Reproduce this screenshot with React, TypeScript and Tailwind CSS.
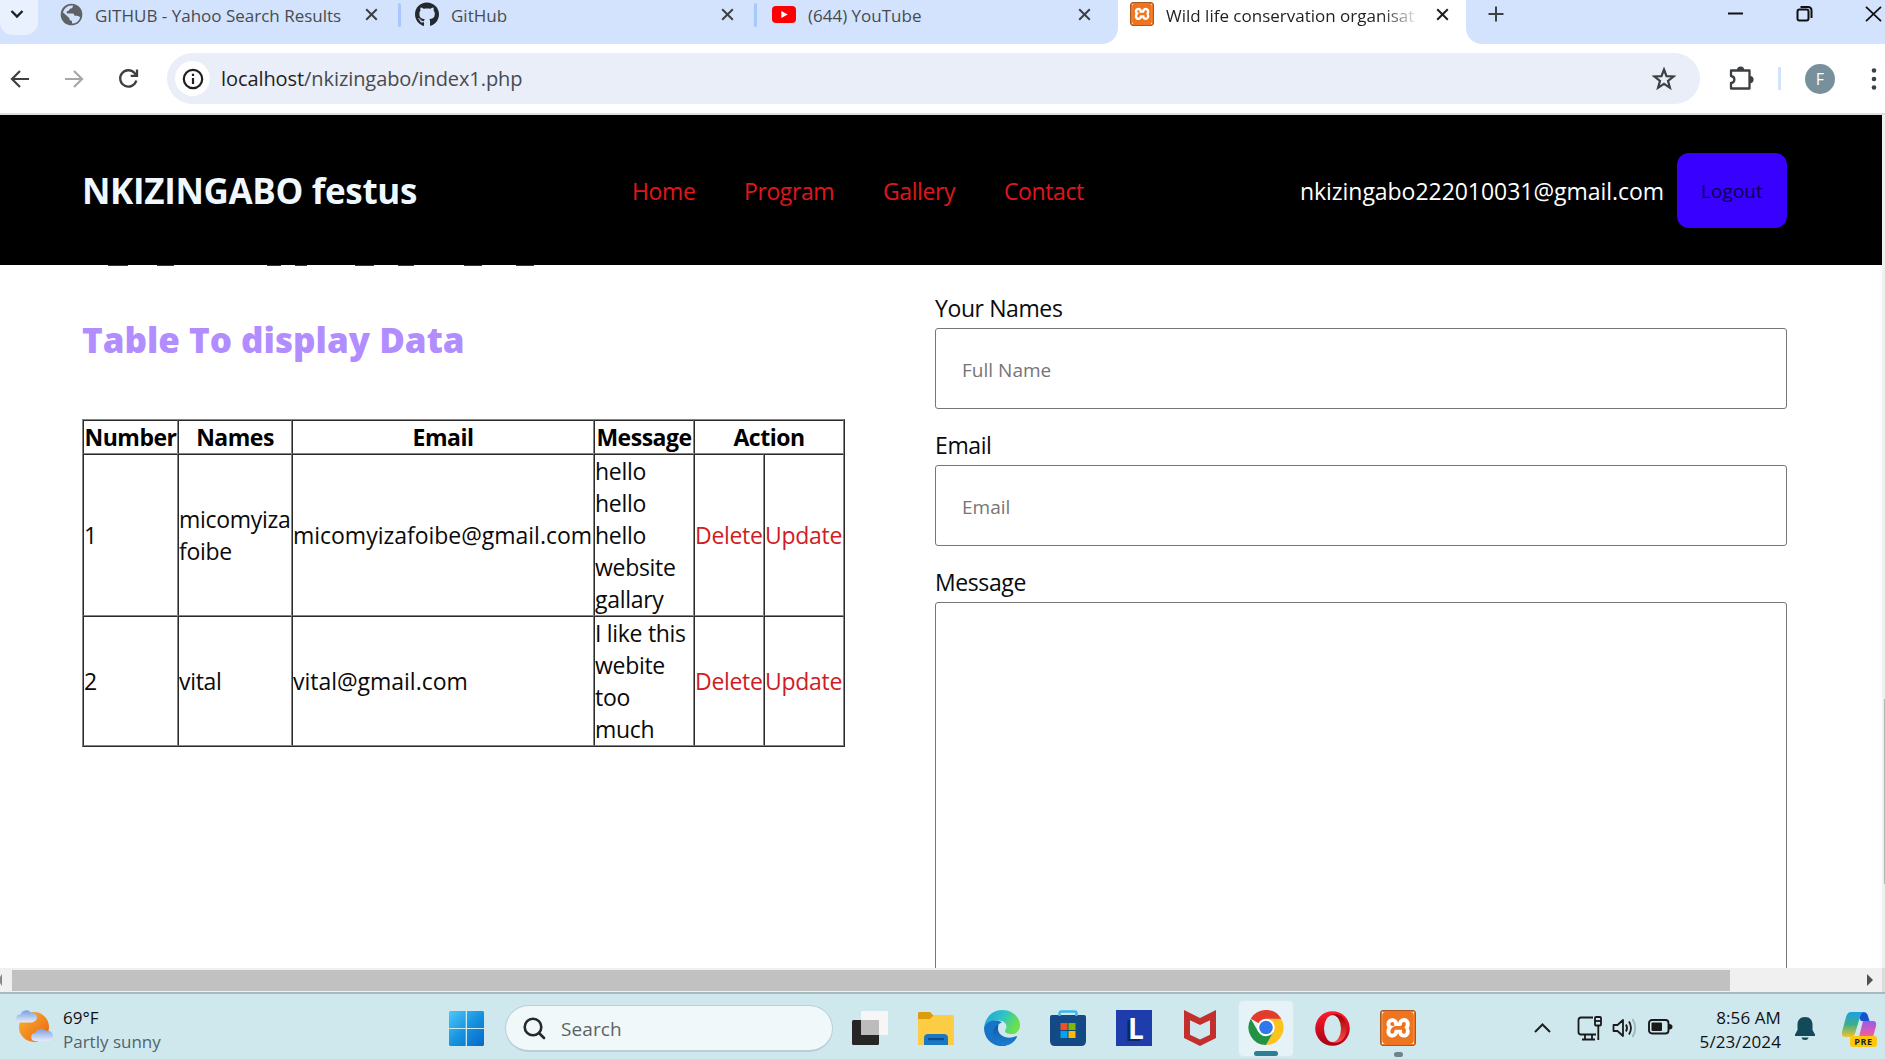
import type { ReactNode } from "react";
import { FaGithub } from "react-icons/fa";
import { SiXampp } from "react-icons/si";

const FONT = "font-['Open_Sans','Noto_Sans',sans-serif]";

function Cross({ className = "", w = 2 }: { className?: string; w?: number }) {
  return (
    <svg className={className} width="13" height="13" viewBox="0 0 13 13" fill="none" stroke="currentColor" strokeWidth={w}>
      <path d="M1.2 1.2l10.6 10.6M11.8 1.2L1.2 11.8" />
    </svg>
  );
}

function GlobeIcon() {
  return (
    <svg width="23" height="23" viewBox="0 0 23 23">
      <circle cx="11.5" cy="11.5" r="10.8" fill="#5f6368" />
      <path d="M13 2.6c-.2 2.4-1.2 3-3.2 3.2-.6 1.6-1 2.4-3 2.3v2.5h5.6c1.4 0 2 .9 2 2.2h2.4c1.7 0 2.4 1 3.4 1.6A9 9 0 0 1 12 20.500v-2.700c-1.700-.2-2.700-1-2.700-2.900L2.900 9.200A9 9 0 0 1 13 2.600z" fill="#d3e3fd" />
      <path d="M14.500 4.200l-1.500 3.600 2.400 2.200 1.800 1.800 3 .4A9 9 0 0 0 14.500 4.200z" fill="#5f6368" />
    </svg>
  );
}

function YouTubeIcon() {
  return (
    <svg width="24" height="17" viewBox="0 0 24 17">
      <rect width="24" height="17" rx="4" fill="#f00" />
      <path d="M9.300 5v7l6.400-3.500z" fill="#fff" />
    </svg>
  );
}

function XamppTile({ size }: { size: number }) {
  return (
    <span className="flex items-center justify-center rounded-[3px] border border-[#a9591e] bg-[#ee7420] p-px text-white">
      <span className="flex bg-white">
        <SiXampp size={size} color="#ee7420" />
      </span>
    </span>
  );
}

function Tab({ icon, title, className = "", closeClass = "", children }: { icon: ReactNode; title: string; className?: string; closeClass?: string; children?: ReactNode }) {
  return (
    <div className={`flex h-[28px] shrink-0 items-center ${className}`}>
      <span className="flex w-[24px] shrink-0 items-center justify-center">{icon}</span>
      <span className="ml-[12px] flex-1 overflow-hidden pt-[3px] text-[17px] leading-[25px] whitespace-nowrap text-[#474b50]">{title}</span>
      <Cross className={`shrink-0 text-[#3c4043] ${closeClass}`} />
      {children}
    </div>
  );
}

function TabStrip() {
  return (
    <div className="flex h-[44px] bg-white">
      <div className="flex w-[1118px] shrink-0 rounded-br-[16px] bg-[#d3e3fd]">
        <div className="flex h-[35px] w-[38px] shrink-0 items-start justify-center rounded-b-[13px] bg-[#e9f0fe] pt-[9px]">
          <svg width="14" height="10" viewBox="0 0 14 10" fill="none" stroke="#1f1f1f" strokeWidth="2.400" className="mr-[4px]">
            <path d="M1.500 2l5.500 5.500L12.500 2" />
          </svg>
        </div>
        <Tab className="ml-[21px] w-[319px]" icon={<GlobeIcon />} title="GITHUB - Yahoo Search Results" />
        <span className="mt-[3px] ml-[20px] h-[24px] w-[3px] rounded bg-[#a8c7fa]" />
        <Tab className="ml-[14px] w-[319px]" icon={<FaGithub size={25} color="#24292f" />} title="GitHub" />
        <span className="mt-[3px] ml-[20px] h-[24px] w-[3px] rounded bg-[#a8c7fa]" />
        <Tab className="ml-[15px] w-[319px]" icon={<YouTubeIcon />} title="(644) YouTube" />
      </div>
      <div className="flex w-[348px] shrink-0 pl-[12px]">
        <div className="flex h-[28px] items-center">
          <XamppTile size={20} />
          <span className="ml-[12px] w-[252px] overflow-hidden bg-linear-to-r from-[#1f1f1f] from-85% to-[#d8d8d8] to-98% bg-clip-text pt-[3px] text-[17px] leading-[25px] whitespace-nowrap text-transparent">
            Wild life conservation organisat
          </span>
          <Cross className="ml-[18px] text-[#1f1f1f]" />
        </div>
      </div>
      <div className="flex h-[44px] flex-1 rounded-bl-[16px] bg-[#d3e3fd] pl-[22px]">
        <svg className="mt-[6px]" width="16" height="16" viewBox="0 0 16 16" stroke="#3c4043" strokeWidth="2">
          <path d="M8 .5v15M.5 8h15" />
        </svg>
        <svg className="mt-[6px] ml-[223px]" width="17" height="16" viewBox="0 0 17 16" stroke="#111" strokeWidth="2">
          <path d="M1 7.500h15" />
        </svg>
        <svg className="mt-[6px] ml-[52px]" width="17" height="16" viewBox="0 0 17 16" fill="none" stroke="#111" strokeWidth="2">
          <rect x="1.500" y="3.500" width="11" height="11" rx="2" />
          <path d="M4.500 1h7.500q3.500 0 3.500 3.500V12" />
        </svg>
        <svg className="mt-[6px] ml-[52px]" width="17" height="16" viewBox="0 0 17 16" fill="none" stroke="#111" strokeWidth="1.800">
          <path d="M1 .8L16 15.200M16 .8L1 15.200" />
        </svg>
      </div>
    </div>
  );
}

function AddressBar() {
  return (
    <div className="flex h-[71px] items-center border-b-2 border-[#dfdfdf] bg-white">
      <svg className="ml-[10px]" width="20" height="20" viewBox="0 0 20 20" fill="none" stroke="#3c4043" strokeWidth="2.200">
        <path d="M10 2L2 10l8 8M2 10h17" />
      </svg>
      <svg className="ml-[34px]" width="20" height="20" viewBox="0 0 20 20" fill="none" stroke="#a5a7a9" strokeWidth="2.200">
        <path d="M10 2l8 8-8 8M18 10H1" />
      </svg>
      <svg className="ml-[34px]" width="21" height="21" viewBox="0 0 21 21" fill="none" stroke="#3c4043" strokeWidth="2.300">
        <path d="M18.300 12.500A8.200 8.200 0 1 1 16.500 5L18.500 7.500M19 1.500v6.300h-6.300" />
      </svg>
      <div className="ml-[28px] flex h-[51px] w-[1533px] items-center rounded-full bg-[#eaeef8]">
        <span className="ml-[8px] flex size-[35px] items-center justify-center rounded-full bg-white">
          <svg width="22" height="22" viewBox="0 0 22 22" fill="none" stroke="#1f1f1f" strokeWidth="2.200">
            <circle cx="11" cy="11" r="9.200" />
            <path d="M11 10v6M11 5.800v2.300" />
          </svg>
        </span>
        <span className="ml-[11px] text-[20px] leading-[30px] tracking-[-0.08px] text-[#474b50]">
          <span className="text-[#1f1f1f]">localhost</span>/nkizingabo/index1.php
        </span>
        <svg className="mr-[24px] ml-auto" width="24" height="24" viewBox="0 0 24 24" fill="none" stroke="#3c4043" strokeWidth="2.200">
          <path d="M12 2.500l2.500 6.600 7 .4-5.500 4.400 1.900 6.900L12 16.900l-5.900 3.900L8 13.900 2.500 9.500l7-.4z" />
        </svg>
      </div>
      <svg className="ml-[28px]" width="26" height="26" viewBox="0 0 26 26">
        <path d="M3 4.500h5.500h13v18H3v-5.500c4.500-.5 4.500-6.500 0-7z" fill="none" stroke="#3c4043" strokeWidth="2.300" strokeLinejoin="round" />
        <path d="M9 4a3.600 3.600 0 0 1 7.200 0zM22 10a3.600 3.600 0 0 1 0 7.200z" fill="#3c4043" />
      </svg>
      <span className="ml-[24px] h-[23px] w-[3px] bg-[#d3e3fd]" />
      <span className="ml-[24px] flex size-[30px] items-center justify-center rounded-full bg-[#78909c] text-[16px] text-white">F</span>
      <svg className="ml-[36px]" width="6" height="22" viewBox="0 0 6 22" fill="#3c4043">
        <circle cx="3" cy="2.500" r="2.300" />
        <circle cx="3" cy="11" r="2.300" />
        <circle cx="3" cy="19.500" r="2.300" />
      </svg>
    </div>
  );
}

function SiteHeader() {
  return (
    <header className="flex h-[150px] items-center bg-black pr-[95px] pl-[82px] whitespace-nowrap">
      <h1 className="w-[550px] pt-[2px] text-[35px] leading-[48px] font-bold tracking-[-0.34px] text-[#f0f8ff]">NKIZINGABO festus</h1>
      <nav className="flex pt-[2px] text-[23px] leading-[32px] tracking-[-0.4px] text-[#e0161a]">
        <a className="w-[112px]">Home</a>
        <a className="w-[139px]">Program</a>
        <a className="w-[121px]">Gallery</a>
        <a>Contact</a>
      </nav>
      <span className="ml-auto pt-[2px] text-[23px] leading-[32px] tracking-[-0.04px] text-white">nkizingabo222010031@gmail.com</span>
      <button className="ml-[13px] h-[75px] w-[110px] rounded-[12px] bg-[#3700ff] pt-[2px] text-[19px] tracking-[0.05px] text-[#0c004a]">Logout</button>
    </header>
  );
}

const cell = "border-t border-l border-r border-b border-t-[#2b2b2b] border-l-[#2b2b2b] border-r-[#858585] border-b-[#858585] p-0";

const rows = [
  { n: "1", names: ["micomyiza", "foibe"], email: "micomyizafoibe@gmail.com", message: ["hello", "hello", "hello", "website", "gallary"], h: "h-[162px]" },
  { n: "2", names: ["vital"], email: "vital@gmail.com", message: ["I like this", "webite", "too", "much"], h: "h-[130px]" },
];

function Lines({ items }: { items: string[] }) {
  return (
    <>
      {items.map((t, i) => (
        <div key={i}>{t}</div>
      ))}
    </>
  );
}

function DataTable() {
  return (
    <table className="w-[763px] table-fixed border-separate border-spacing-0 border border-t-[#858585] border-r-[#2b2b2b] border-b-[#2b2b2b] border-l-[#858585] text-[23px] leading-[32px] tracking-[-0.3px] whitespace-nowrap text-[#0a0a0a]">
      <colgroup>
        <col className="w-[95px]" />
        <col className="w-[114px]" />
        <col className="w-[302px]" />
        <col className="w-[100px]" />
        <col className="w-[70px]" />
        <col className="w-[80px]" />
      </colgroup>
      <thead>
        <tr className="h-[34px] tracking-[-0.5px] text-black">
          <th className={cell}>Number</th>
          <th className={cell}>Names</th>
          <th className={cell}>Email</th>
          <th className={cell}>Message</th>
          <th className={cell} colSpan={2}>Action</th>
        </tr>
      </thead>
      <tbody>
        {rows.map((r) => (
          <tr key={r.n} className={r.h}>
            <td className={cell}>{r.n}</td>
            <td className={cell}><Lines items={r.names} /></td>
            <td className={`${cell} tracking-[-0.02px]`}>{r.email}</td>
            <td className={cell}><Lines items={r.message} /></td>
            <td className={`${cell} text-[#d01c24]`}>Delete</td>
            <td className={`${cell} text-[#d01c24]`}>Update</td>
          </tr>
        ))}
      </tbody>
    </table>
  );
}

function Field({ label, placeholder, boxClass }: { label: string; placeholder?: string; boxClass: string }) {
  return (
    <div>
      <div className="h-[56px] pt-[20px] text-[23px] leading-[32px] tracking-[-0.4px] text-[#0a0a0a]">{label}</div>
      <div className={`flex w-[852px] items-center rounded-[3px] border border-[#767676] pt-[4px] pl-[26px] text-[19px] tracking-[0.02px] text-[#757575] ${boxClass}`}>{placeholder}</div>
    </div>
  );
}

function PageBody() {
  return (
    <main className="flex h-[703px] overflow-hidden bg-white">
      <section className="w-[935px] shrink-0 pl-[82px]">
        <div className="flex h-[1px] text-[#3c1fa8]">
          <span className="ml-[26px] w-[20px] bg-current" />
          <span className="ml-[29px] w-[17px] bg-current" />
          <span className="ml-[93px] w-[14px] bg-current" />
          <span className="ml-[14px] w-[12px] bg-current" />
          <span className="ml-[48px] w-[19px] bg-current" />
          <span className="ml-[24px] w-[16px] bg-current" />
          <span className="ml-[50px] w-[18px] bg-current" />
          <span className="ml-[34px] w-[18px] bg-current" />
        </div>
        <h2 className="mt-[50px] mb-[55px] text-[35px] leading-[48px] font-extrabold text-[#b28dff]">Table To display Data</h2>
        <DataTable />
      </section>
      <section className="pt-[7px]">
        <Field label="Your Names" placeholder="Full Name" boxClass="h-[81px]" />
        <Field label="Email" placeholder="Email" boxClass="h-[81px]" />
        <Field label="Message" boxClass="h-[440px]" />
      </section>
    </main>
  );
}

function HorizontalScrollbar() {
  return (
    <div className="flex h-[24px] items-center bg-[#f0f0f0] pb-px">
      <svg width="3" height="12" viewBox="0 0 3 12"><path d="M2 0v12L0 9V3z" fill="#888" /></svg>
      <span className="mt-px ml-[9px] h-[21px] w-[1718px] bg-[#c1c1c1]" />
      <svg className="ml-[137px]" width="6" height="12" viewBox="0 0 6 12"><path d="M0 0l6 6-6 6z" fill="#505050" /></svg>
    </div>
  );
}

function WeatherIcon() {
  return (
    <svg width="37" height="34" viewBox="0 0 37 34">
      <defs>
        <linearGradient id="sun" x1="0" y1="0" x2="1" y2="1"><stop stopColor="#f7b731" /><stop offset="1" stopColor="#ee5d10" /></linearGradient>
        <linearGradient id="cloud" x1="0" y1="0" x2="0" y2="1"><stop stopColor="#7b9fe0" /><stop offset="1" stopColor="#e4ecfc" /></linearGradient>
      </defs>
      <circle cx="18" cy="18" r="15" fill="url(#sun)" />
      <path d="M4 13.500a4 4 0 0 1 .5-8A6 6 0 0 1 15 3.800a4.500 4.500 0 0 1 3 8.700q-1 1-2.500 1z" fill="url(#cloud)" />
      <path d="M19 32a4 4 0 0 1 .5-8A6 6 0 0 1 30 22a5 5 0 0 1 3.500 10z" fill="url(#cloud)" />
    </svg>
  );
}

function StartIcon() {
  return (
    <svg width="35" height="35" viewBox="0 0 35 35">
      <defs>
        <linearGradient id="win" x1="0" y1="0" x2="1" y2="1" gradientUnits="objectBoundingBox"><stop stopColor="#4cc9fb" /><stop offset=".5" stopColor="#1793e0" /><stop offset="1" stopColor="#0468c8" /></linearGradient>
      </defs>
      <path d="M1 0h15.700v17H0V1zM18 0h16l1 1v16H18zM0 18h16.700v17H1l-1-1zM18 18h17v16l-1 1H18z" fill="url(#win)" />
    </svg>
  );
}

function TaskViewIcon() {
  return (
    <svg width="36" height="34" viewBox="0 0 36 34">
      <rect x="0" y="9" width="27" height="25" rx="1.500" fill="#262626" />
      <rect x="9" y="0" width="27" height="24" rx="1" fill="#f6f6f6" />
      <rect x="9" y="9" width="18" height="15" fill="#bcbcbc" />
    </svg>
  );
}

function ExplorerIcon() {
  return (
    <svg width="36" height="33" viewBox="0 0 36 33">
      <path d="M0 1.500Q0 0 1.500 0h10.500l3.500 3.500V10H0z" fill="#dc9c0b" />
      <path d="M0 7h12l4-4h18.500Q36 3 36 4.500V33H0z" fill="#fdcc45" />
      <path d="M6 33v-7q0-4 4-4h16q4 0 4 4v7z" fill="#1a78c2" />
      <rect x="10" y="26" width="16" height="2.200" rx="1" fill="#0c4a8b" />
    </svg>
  );
}

function EdgeIcon() {
  return (
    <svg width="36" height="36" viewBox="0 0 36 36">
      <defs>
        <linearGradient id="edgeTop" x1="0" y1="0" x2="1" y2=".4"><stop stopColor="#1f9fdc" /><stop offset=".55" stopColor="#2fc4c4" /><stop offset="1" stopColor="#6be04b" /></linearGradient>
        <linearGradient id="edgeLow" x1="0" y1="0" x2="0" y2="1"><stop stopColor="#0f58a6" /><stop offset="1" stopColor="#1b7fd0" /></linearGradient>
      </defs>
      <path d="M0 18C1 7 9 0 18 0c11 0 18 8 18 15 0 6-4 9-8.500 9-4 0-6.500-1.300-6.500-3 0-1.200 1.500-1.800 1.500-4.500 0-3-3-6-8-6C7 10.500 1 13 0 18z" fill="url(#edgeTop)" />
      <path d="M0 18c1-5 6-7.500 11-7.500 3 0 5 .5 7 2-3 .5-6 4-6 8.500 0 7 5 12 11 15C9 38 0 29 0 18z" fill="#1673c8" />
      <path d="M14.500 14.500c-4 2-6 6-5.500 10 .7 6 5.500 11 11.500 11 5 0 10-3.500 12.500-8.500.3-.8-.3-1-1-.7-8 3.500-18.500 0-18-8.300z" fill="url(#edgeLow)" />
    </svg>
  );
}

function StoreIcon() {
  return (
    <svg width="36" height="36" viewBox="0 0 36 36">
      <path d="M0 7q0-2 2-2h32q2 0 2 2v24q0 5-5 5H5q-5 0-5-5z" fill="#134a86" />
      <path d="M9.500 6V3.500q0-2 2-2h13q2 0 2 2V6" fill="none" stroke="#38b6ee" strokeWidth="2.400" />
      <path d="M10.500 13h7v7h-7z" fill="#f25022" />
      <path d="M18.500 13h7v7h-7z" fill="#7fba00" />
      <path d="M10.500 21h7v7h-7z" fill="#00a4ef" />
      <path d="M18.500 21h7v7h-7z" fill="#ffb900" />
    </svg>
  );
}

function McAfeeIcon() {
  return (
    <svg width="32" height="36" viewBox="0 0 32 36">
      <path fillRule="evenodd" fill="#c32f2c" d="M0 0l16 8 16-8v28l-16 8-16-8zM6 10.300v14.400l10 4.700 10-4.700V10.300L16 15z" />
    </svg>
  );
}

function ChromeIcon() {
  return (
    <svg width="36" height="36" viewBox="0 0 36 36">
      <path d="M18 18L2.400 9A18 18 0 0 1 33.600 9z" fill="#e33b2e" />
      <path d="M18 9h15.600A18 18 0 0 1 18 36l7.800-13.500z" fill="#fcc31e" />
      <path d="M10.200 22.500L2.400 9A18 18 0 0 0 18 36l7.800-13.500z" fill="#229342" />
      <circle cx="18" cy="18" r="9" fill="#fff" />
      <circle cx="18" cy="18" r="7" fill="#2f78ee" />
    </svg>
  );
}

function OperaIcon() {
  return (
    <svg width="35" height="35" viewBox="0 0 35 35">
      <defs>
        <linearGradient id="opera" x1="0" y1="0" x2="0" y2="1"><stop stopColor="#ff1b2d" /><stop offset="1" stopColor="#a70014" /></linearGradient>
        <linearGradient id="operaR" x1="0" y1="0" x2="0" y2="1"><stop stopColor="#9c0000" /><stop offset="1" stopColor="#ff4b4b" /></linearGradient>
      </defs>
      <circle cx="17.500" cy="17.500" r="17.300" fill="url(#opera)" />
      <path d="M12 6.500C15 3 21 2 26.500 5a17.300 17.300 0 0 1 0 25C21 33 15 32 12 28.500z" fill="url(#operaR)" />
      <ellipse cx="17.500" cy="17.500" rx="8.500" ry="13.500" fill="#cfe8ee" />
    </svg>
  );
}

function CopilotIcon() {
  return (
    <span className="relative block h-[36px] w-[36px]">
      <svg width="35" height="30" viewBox="0 0 35 30">
        <defs>
          <linearGradient id="cpA" x1="0" y1="0" x2="0" y2="1"><stop stopColor="#1aa0e8" /><stop offset=".5" stopColor="#3fae87" /><stop offset="1" stopColor="#f2c230" /></linearGradient>
          <linearGradient id="cpB" x1="0" y1="0" x2="0" y2="1"><stop stopColor="#9a5be8" /><stop offset=".6" stopColor="#e85ba8" /><stop offset="1" stopColor="#fb8b5a" /></linearGradient>
        </defs>
        <path d="M14 0h7q4 0 5 4l1.500 5H19z" fill="#1850cf" />
        <path d="M9 0h13q-3 1-4 5l-4.500 15q-1 5-5 5H3q-4 0-3-5L4 5q1.500-5 5-5z" fill="url(#cpA)" />
        <path d="M21 9h10q4 0 3 5l-3 11q-1.500 5-5 5H13q3-1 4-5z" fill="url(#cpB)" />
      </svg>
      <span className="absolute top-[24px] left-[8px] flex h-[11px] w-[27px] items-center justify-center rounded-[3px] bg-[#fdc70c] text-[9px] font-bold tracking-[0.6px] text-[#1f1f1f]">PRE</span>
    </span>
  );
}

function Taskbar() {
  return (
    <footer className="flex h-[67px] items-start border-t-2 border-[#a7b8bf] bg-[#cfe8ee]">
      <div className="flex w-[449px] shrink-0 pt-[15px] pl-[16px]">
        <WeatherIcon />
        <div className="ml-[10px] pt-[1px] text-[17px] leading-[24px] whitespace-nowrap text-[#111]">
          <div className="-mt-[4px]">69°F</div>
          <div className="text-[#52636a]">Partly sunny</div>
        </div>
      </div>
      <div className="w-[56px] shrink-0 pt-[17px]"><StartIcon /></div>
      <div className="mt-[11px] flex h-[47px] w-[328px] shrink-0 items-center rounded-full border border-b-2 border-[#b9cfd6] bg-[#f0f8fa] pl-[17px]">
        <svg width="23" height="23" viewBox="0 0 23 23" fill="none" stroke="#26292b" strokeWidth="2.600" strokeLinecap="round">
          <circle cx="10" cy="10" r="8.300" />
          <path d="M16 16l5 5" />
        </svg>
        <span className="ml-[15px] pt-[2px] text-[19px] leading-[28px] tracking-[0.1px] text-[#5c6366]">Search</span>
      </div>
      <div className="mt-[17px] ml-[19px]"><TaskViewIcon /></div>
      <div className="mt-[18px] ml-[30px]"><ExplorerIcon /></div>
      <div className="mt-[16px] ml-[30px]"><EdgeIcon /></div>
      <div className="mt-[16px] ml-[30px]"><StoreIcon /></div>
      <div className="mt-[16px] ml-[30px] flex size-[36px] shrink-0 items-center justify-center bg-[#1e3cab] pl-[4px] text-[28px] leading-[36px] font-bold text-white [text-shadow:-3px_2px_0_#10265e]">L</div>
      <div className="mt-[16px] ml-[32px]"><McAfeeIcon /></div>
      <div className="mt-[6px] ml-[22px] flex h-[57px] w-[56px] shrink-0 flex-col items-center rounded-[5px] border border-[#d8e9ee] bg-[#e5f2f7] pt-[9px]">
        <ChromeIcon />
        <span className="mt-[6px] h-[5px] w-[24px] shrink-0 rounded-full bg-[#2b7f90]" />
      </div>
      <div className="mt-[17px] ml-[21px]"><OperaIcon /></div>
      <div className="mt-[16px] ml-[30px] flex flex-col items-center">
        <XamppTile size={32} />
        <span className="mt-[6px] h-[5px] w-[9px] rounded-full bg-[#6f8389]" />
      </div>
      <svg className="mt-[29px] ml-[118px] shrink-0" width="17" height="10" viewBox="0 0 17 10" fill="none" stroke="#1f1f1f" strokeWidth="2">
        <path d="M1 9l7.500-7.500L16 9" />
      </svg>
      <svg className="mt-[21px] ml-[26px] shrink-0" width="25" height="26" viewBox="0 0 25 26" fill="none" stroke="#1a1a1a" strokeWidth="1.800">
        <path d="M16 2.500H4q-2.500 0-2.500 2.500v12q0 2.500 2.500 2.500h15M8 20v4M15 20v4M5 24.500h13M21.300 11v14" />
        <rect x="18" y="2" width="6" height="8.500" rx="1" />
        <path d="M18 6h6" />
      </svg>
      <svg className="mt-[24px] ml-[10px] shrink-0" width="26" height="20" viewBox="0 0 26 20" fill="none" stroke="#1a1a1a" strokeWidth="1.800" strokeLinejoin="round">
        <path d="M1.500 7v6h4l5.500 5V2L5.500 7z" />
        <path d="M14 6.500q2 3.500 0 7M17 3.500q4 6.500 0 13" />
        <path d="M20.500 1q5.500 9 0 18" stroke="#9fb4ba" />
      </svg>
      <svg className="mt-[25px] ml-[10px] shrink-0" width="25" height="16" viewBox="0 0 25 16">
        <rect x="1" y="1" width="19.500" height="13.500" rx="3" fill="none" stroke="#1a1a1a" strokeWidth="1.900" />
        <rect x="3.500" y="3.600" width="10.500" height="8.400" rx="1" fill="#1a1a1a" />
        <path d="M21 5q3.500 0 3.500 2.800T21 10.500z" fill="#1a1a1a" />
      </svg>
      <div className="ml-auto shrink-0 pt-[12px] text-right text-[17px] leading-[24px] tracking-[0.1px] whitespace-nowrap text-[#111]">
        <div>8:56 AM</div>
        <div>5/23/2024</div>
      </div>
      <svg className="mt-[23px] ml-[14px] shrink-0" width="20" height="24" viewBox="0 0 20 24" fill="#134a5a">
        <path d="M10 0c-5 0-7.500 3.500-7.500 7.500V13L0 17.500V19h20v-1.500L17.500 13V7.500C17.500 3.500 15 0 10 0zM6.500 20.500h7Q13 23 10 23t-3.500-2.500z" />
      </svg>
      <div className="mt-[18px] mr-[7px] ml-[27px] shrink-0"><CopilotIcon /></div>
    </footer>
  );
}

export default function App() {
  return (
    <div className={`h-[1059px] w-[1885px] overflow-hidden bg-white ${FONT}`}>
      <TabStrip />
      <AddressBar />
      <div className="flex">
        <div className="w-[1882px]">
          <SiteHeader />
          <PageBody />
          <HorizontalScrollbar />
        </div>
        <div className="flex w-[3px] flex-col items-end bg-[#f0f0f0]">
          <span className="mt-[584px] h-[185px] w-px bg-[#b5b5b5]" />
          <span className="mt-auto h-[24px] w-[3px] bg-[#dcdcdc]" />
        </div>
      </div>
      <Taskbar />
    </div>
  );
}
